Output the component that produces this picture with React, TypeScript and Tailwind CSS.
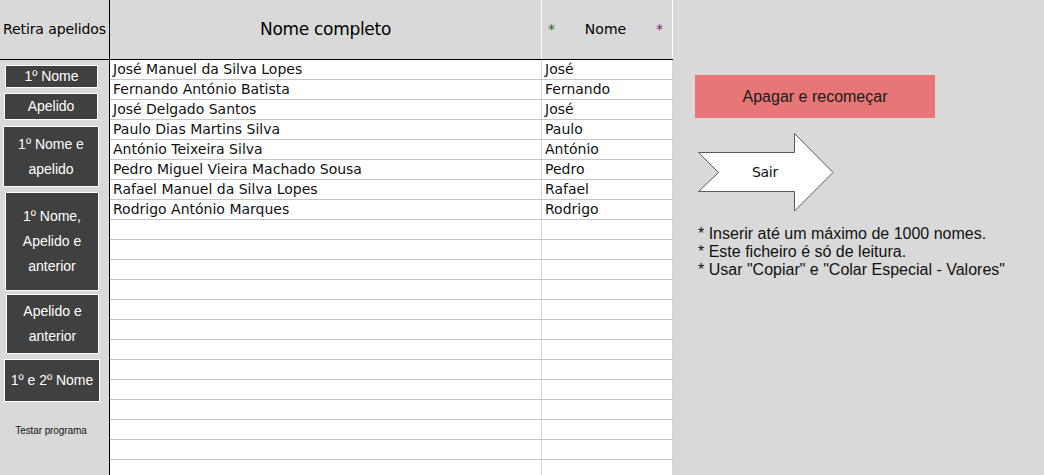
import React from "react";

const names = [
  ["José Manuel da Silva Lopes", "José"],
  ["Fernando António Batista", "Fernando"],
  ["José Delgado Santos", "José"],
  ["Paulo Dias Martins Silva", "Paulo"],
  ["António Teixeira Silva", "António"],
  ["Pedro Miguel Vieira Machado Sousa", "Pedro"],
  ["Rafael Manuel da Silva Lopes", "Rafael"],
  ["Rodrigo António Marques", "Rodrigo"],
];

const rows = Array.from({ length: 21 }, (_, i) => names[i] ?? ["", ""]);

const SheetButton = ({ className, children }: { className: string; children: React.ReactNode }) => (
  <div
    className={`flex flex-col items-center justify-center border border-white bg-[#404040] text-center text-[14px] leading-[25px] text-white ${className}`}
  >
    {children}
  </div>
);

const Arrow = () => (
  <svg width="136" height="79" viewBox="0 0 136 79" className="block">
    <polygon
      points="0.5,19.5 96.5,19.5 96.5,0.5 135,39.5 96.5,78 96.5,58.5 0.5,58.5 20.5,39.5"
      fill="#ffffff"
      stroke="#5a5a5a"
      strokeWidth="1"
    />
  </svg>
);

export default function App() {
  return (
    <div className="flex h-[475px] w-[1044px] overflow-hidden bg-[#d9d9d9] font-['DejaVu_Sans',sans-serif] text-black">
      {/* Sheet */}
      <div className="flex w-[673px] flex-col">
        {/* Header */}
        <div className="flex h-[60px] shrink-0 border-b border-black">
          <div className="flex w-[110px] items-center justify-center border-r border-black text-[14px] tracking-[-0.1px]">
            Retira apelidos
          </div>
          <div className="flex w-[432px] items-center justify-center border-r border-white text-[17px] tracking-[-0.3px]">
            Nome completo
          </div>
          <div className="flex w-[131px] items-center justify-between border-r border-white pl-[6px] pr-[9px] text-[14px]">
            <span className="text-[#1d6b1d]">*</span>
            <span>Nome</span>
            <span className="text-[#7b1a7b]">*</span>
          </div>
        </div>

        {/* Body */}
        <div className="flex flex-1">
          {/* Left button column */}
          <div className="flex w-[110px] shrink-0 flex-col border-r border-black font-['Liberation_Sans',sans-serif]">
            <SheetButton className="ml-[5px] mt-[5px] h-[23px] w-[93px]">1º Nome</SheetButton>
            <SheetButton className="ml-[4px] mt-[5px] h-[27px] w-[94px]">Apelido</SheetButton>
            <SheetButton className="ml-[3px] mt-[6px] h-[61px] w-[96px]">
              <span>1º Nome e</span>
              <span>apelido</span>
            </SheetButton>
            <SheetButton className="ml-[5px] mt-[5px] h-[99px] w-[94px]">
              <span>1º Nome,</span>
              <span>Apelido e</span>
              <span>anterior</span>
            </SheetButton>
            <SheetButton className="ml-[6px] mt-[3px] h-[60px] w-[93px]">
              <span>Apelido e</span>
              <span>anterior</span>
            </SheetButton>
            <SheetButton className="ml-[4px] mt-[5px] h-[43px] w-[96px]">1º e 2º Nome</SheetButton>
            <div className="mt-[21px] w-[102px] text-center text-[10px] tracking-[-0.1px] text-[#111]">
              Testar programa
            </div>
          </div>

          {/* Grid */}
          <div className="flex w-[563px] flex-col overflow-hidden bg-white text-[14px] text-[#111]">
            {rows.map(([full, first], i) => (
              <div key={i} className="flex h-[20px] shrink-0 border-b border-[#c6c6c6]">
                <div className="w-[432px] border-r border-[#d4d4d4] pl-[3px] leading-[19px]">{full}</div>
                <div className="w-[131px] border-r border-[#d4d4d4] pl-[3px] leading-[19px]">{first}</div>
              </div>
            ))}
          </div>
        </div>
      </div>

      {/* Right panel */}
      <div className="flex flex-1 flex-col pl-[22px] pt-[75px] font-['Liberation_Sans',sans-serif]">
        <div className="flex h-[43px] w-[240px] items-center justify-center bg-[#e87676] text-[16px] text-[#1a1a1a]">
          Apagar e recomeçar
        </div>
        <div className="relative ml-[3px] mt-[15px] h-[79px] w-[136px]">
          <Arrow />
          <span className="absolute left-[54px] top-[29px] font-['DejaVu_Sans',sans-serif] text-[14px] tracking-[-0.3px] text-[#111]">
            Sair
          </span>
        </div>
        <div className="ml-[3px] mt-[13px] text-[16px] leading-[18px] text-[#111]">
          <div>* Inserir até um máximo de 1000 nomes.</div>
          <div>* Este ficheiro é só de leitura.</div>
          <div>* Usar "Copiar" e "Colar Especial - Valores"</div>
        </div>
      </div>
    </div>
  );
}
